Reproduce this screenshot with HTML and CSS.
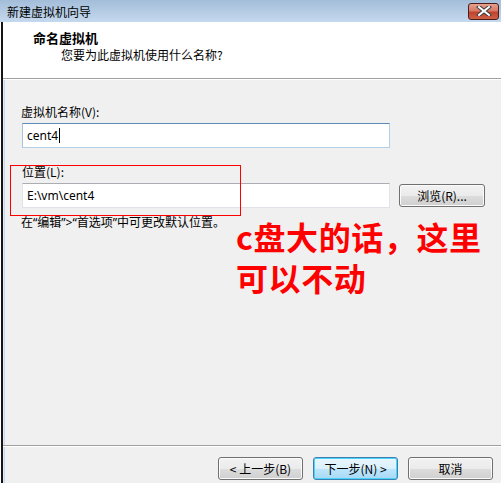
FILE: index.html
```html
<!DOCTYPE html>
<html lang="zh-CN">
<head>
<meta charset="utf-8">
<title>新建虚拟机向导</title>
<link rel="stylesheet" href="styles.css">
</head>
<body>
<div class="window">
  <div class="titlebar">
    <span class="title">新建虚拟机向导</span>
    <span class="close">
      <svg width="16" height="10" viewBox="0 0 16 10">
        <path d="M3 1 L13 9 M13 1 L3 9" stroke="#3a3a3a" stroke-width="4" stroke-linecap="square"/>
        <path d="M3 1 L13 9 M13 1 L3 9" stroke="#ffffff" stroke-width="2" stroke-linecap="square"/>
      </svg>
    </span>
  </div>
  <div class="frame">
    <div class="header">
      <div class="h-title">命名虚拟机</div>
      <div class="h-sub">您要为此虚拟机使用什么名称?</div>
    </div>
    <div class="content">
      <div class="label">虚拟机名称(V):</div>
      <div class="input focused"><span>cent4</span><span class="caret"></span></div>
      <div class="label second">位置(L):</div>
      <div class="row">
        <div class="input">E:\vm\cent4</div>
        <div class="btn browse">浏览(R)...</div>
      </div>
      <div class="hint">在“编辑”&gt;“首选项”中可更改默认位置。</div>
      <div class="mark-box"></div>
      <div class="note">
        <div class="note-line">c盘大的话，这里</div>
        <div class="note-line">可以不动</div>
      </div>
    </div>
    <div class="footer">
      <div class="btn">&lt; 上一步(B)</div>
      <div class="btn default">下一步(N) &gt;</div>
      <div class="btn">取消</div>
    </div>
  </div>
</div>
</body>
</html>
```

FILE: styles.css
```css
html, body {
  margin: 0;
  padding: 0;
  background: #ffffff;
}
body {
  width: 501px;
  height: 483px;
  overflow: hidden;
  font-family: "Noto Sans", "Noto Sans CJK SC", sans-serif;
  font-size: 12px;
  color: #000;
}
.window {
  width: 501px;
  height: 483px;
  display: flex;
  flex-direction: column;
}
.titlebar {
  height: 22px;
  flex: none;
  background: linear-gradient(#a3bdd9, #c5d9ee);
  display: flex;
  align-items: center;
  justify-content: space-between;
  padding: 0 2px 0 7px;
}
.title {
  font-family: "Noto Sans CJK SC", sans-serif;
  font-size: 12px;
  line-height: 16px;
  color: #000;
  margin-top: 1px;
}
.close {
  width: 29px;
  height: 15px;
  border: 1px solid #4a1d1a;
  border-radius: 3px;
  background: linear-gradient(#e6a090 0%, #d67a66 45%, #c0432c 55%, #cf5f48 100%);
  display: flex;
  align-items: center;
  justify-content: center;
}
.frame {
  flex: 1;
  margin-left: 1px;
  border-left: 2px solid #151515;
  display: flex;
  flex-direction: column;
  background: #f0f0f0;
  box-shadow: inset 1px 0 0 #dfe7ef, inset 2px 0 0 #c8ddf4;
}
.header {
  height: 57px;
  background: #ffffff;
  border-bottom: 1px solid #a0a0a0;
  flex: none;
  padding-left: 30px;
  box-sizing: border-box;
  font-family: "Noto Sans CJK SC", sans-serif;
}
.h-title {
  font-weight: bold;
  font-size: 13px;
  line-height: 16px;
  padding-top: 8px;
}
.h-sub {
  font-size: 12px;
  line-height: 16px;
  padding-left: 28px;
  margin-top: 1px;
}
.content {
  flex: 1;
  position: relative;
  padding: 24px 0 0 18px;
  border-top: 1px solid #ffffff;
}
.label {
  font-family: "Noto Sans CJK SC", sans-serif;
  line-height: 16px;
  height: 16px;
  margin-bottom: 3px;
}
.label.second {
  margin-top: 16px;
  margin-left: 1px;
}
.input {
  width: 368px;
  height: 25px;
  box-sizing: border-box;
  background: #fff;
  border: 1px solid #e2e3ea;
  border-top-color: #abadb3;
  padding: 0 0 0 4px;
  line-height: 23px;
  font-size: 12px;
  display: flex;
  align-items: center;
  margin-left: 1px;
}
.input.focused {
  border-color: #b5cfe7;
  border-top-color: #5b8ab6;
  border-left-color: #a7c3de;
}
.caret {
  width: 1px;
  height: 15px;
  background: #000;
  margin-left: 1px;
}
.row {
  display: flex;
  align-items: center;
  gap: 9px;
}
.btn {
  width: 85px;
  height: 23px;
  box-sizing: border-box;
  border: 1px solid #707070;
  border-radius: 3px;
  background: linear-gradient(#f2f2f2 0%, #ebebeb 50%, #dddddd 51%, #cfcfcf 100%);
  box-shadow: inset 0 0 0 1px #fbfbfb;
  display: flex;
  align-items: center;
  justify-content: center;
  font-family: "Noto Sans CJK SC", sans-serif;
  font-size: 12px;
  line-height: 16px;
}
.btn.browse {
  width: 86px;
}
.hint {
  font-family: "Noto Sans", "Noto Sans CJK SC", sans-serif;
  line-height: 16px;
  margin-top: 7px;
}
.mark-box {
  position: absolute;
  left: 7px;
  top: 85px;
  width: 229px;
  height: 49px;
  border: 1px solid #ff0000;
}
.note {
  position: absolute;
  left: 233px;
  top: 136px;
  color: #ff0000;
  font-family: "Noto Sans CJK SC", sans-serif;
  font-weight: bold;
  font-size: 32px;
  letter-spacing: 0.6px;
}
.note-line {
  height: 41px;
  line-height: 41px;
  white-space: nowrap;
}
.footer {
  flex: none;
  height: 38px;
  border-top: 1px solid #a0a0a0;
  box-shadow: inset 0 1px 0 #ffffff;
  display: flex;
  justify-content: flex-end;
  gap: 10px;
  padding: 11px 8px 0 0;
  box-sizing: border-box;
}
.btn.default {
  border-color: #3c7fb1;
  box-shadow: inset 0 0 0 1px #48d4fb;
  background: linear-gradient(#eaf6fd 0%, #d9f0fc 50%, #bee6fd 51%, #a7d9f5 100%);
}
```
